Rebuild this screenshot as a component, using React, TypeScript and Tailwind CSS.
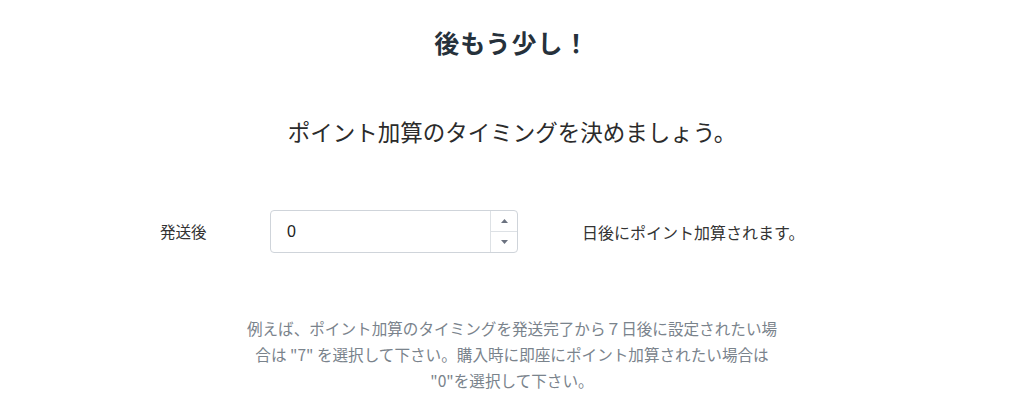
import React from "react";

const jp = { fontFamily: '"Noto Sans CJK JP", "Noto Sans", sans-serif' };

export default function App() {
  return (
    <div className="w-[1024px] h-[406px] bg-white text-[#333333] flex flex-col items-center" style={jp}>
      <h1 className="mt-[24px] h-[36px] leading-[36px] text-[25px] font-bold text-[#26313b] tracking-[1px]">後もう少し！</h1>
      <p className="mt-[56px] h-[30px] leading-[30px] text-[22.5px] text-[#2b2b2b]">ポイント加算のタイミングを決めましょう。</p>
      <div className="mt-[64px] w-full flex items-center pl-[160px]">
        <div className="w-[110px] text-[15.5px] text-[#333]">発送後</div>
        <div className="w-[248px] h-[43px] border border-[#cfd4da] rounded-[4px] flex overflow-hidden">
          <div className="flex-1 flex items-center pl-[16px] text-[16px] text-[#222]" style={{ fontFamily: '"Liberation Sans", sans-serif' }}>0</div>
          <div className="w-[27px] border-l border-[#dde1e5] flex flex-col">
            <div className="flex-1 flex items-center justify-center border-b border-[#dde1e5]">
              <svg width="7" height="4" viewBox="0 0 7 4"><path d="M0 4 L3.5 0 L7 4 Z" fill="#6b7280" /></svg>
            </div>
            <div className="flex-1 flex items-center justify-center">
              <svg width="7" height="4" viewBox="0 0 7 4"><path d="M0 0 L3.5 4 L7 0 Z" fill="#6b7280" /></svg>
            </div>
          </div>
        </div>
        <div className="ml-[64px] text-[16px] text-[#333]">日後にポイント加算されます。</div>
      </div>
      <p className="mt-[62px] w-[560px] text-center text-[15.6px] leading-[26px] text-[#7a838c]">
        例えば、ポイント加算のタイミングを発送完了から７日後に設定されたい場
        <br />
        合は "7" を選択して下さい。購入時に即座にポイント加算されたい場合は
        <br />
        "0"を選択して下さい。
      </p>
    </div>
  );
}
